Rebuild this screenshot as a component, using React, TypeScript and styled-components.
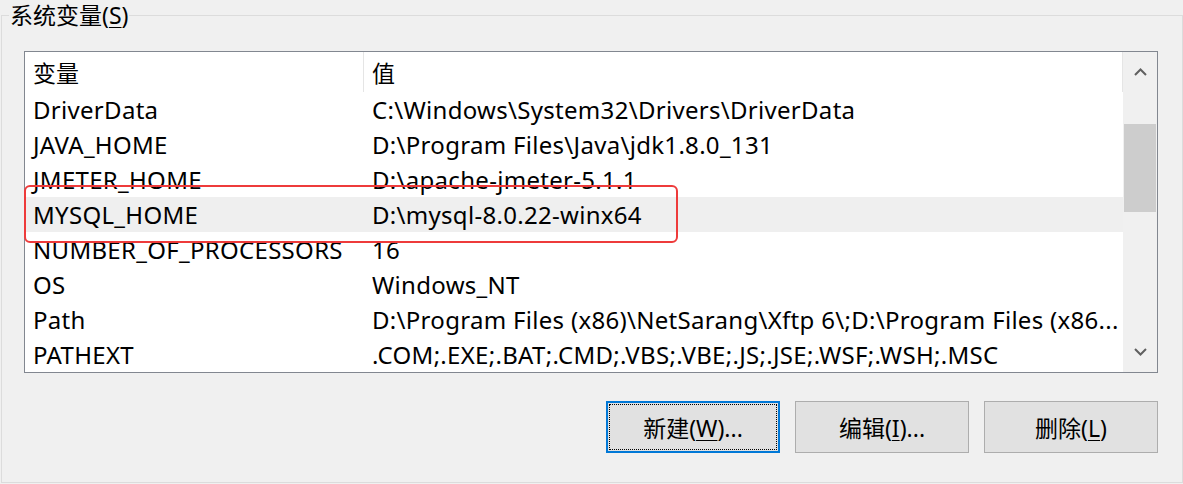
import React from "react";
import styled, { createGlobalStyle } from "styled-components";

const GlobalStyle = createGlobalStyle`
    html, body {
        margin: 0;
        padding: 0;
        background: #f0f0f0;
    }
    body {
        width: 1183px;
        height: 484px;
        overflow: hidden;
        font-family: "Noto Sans", "Noto Sans CJK SC", sans-serif;
        font-size: 23px;
        color: #000;
    }
    * {
        box-sizing: border-box;
    }
`;

const GroupBox = styled.fieldset`
    width: 1182px;
    height: 483px;
    margin: 0 0 0 1px;
    padding: 0 24px 0 22px;
    border: 1px solid #dcdcdc;
    min-width: 0;
`;

const Legend = styled.legend`
    margin-left: -15px;
    padding: 0 1px;
    line-height: 30px;
    font-size: 23px;
`;

const Mnemonic = styled.span`
    text-decoration: underline;
    text-underline-offset: 3px;
    text-decoration-thickness: 1px;
`;

const ListView = styled.div`
    position: relative;
    margin-top: 21px;
    height: 322px;
    border: 1px solid #828790;
    background: #fff;
    display: flex;
`;

const Table = styled.div`
    flex: 1;
    display: flex;
    flex-direction: column;
    min-width: 0;
`;

const HeaderRow = styled.div`
    display: grid;
    grid-template-columns: 339px 1fr;
    height: 40px;
    border-right: 1px solid #e5e5e5;
`;

const HeaderCell = styled.div<{ $divider?: boolean }>`
    padding-left: 8px;
    display: flex;
    align-items: center;
    border-right: ${(p) => (p.$divider ? "1px solid #e5e5e5" : "none")};
`;

const Row = styled.div<{ $hover?: boolean }>`
    display: grid;
    grid-template-columns: 339px 1fr;
    height: 35px;
    align-items: center;
    background: ${(p) => (p.$hover ? "#efefef" : "transparent")};
`;

const Cell = styled.div`
    padding-left: 8px;
    white-space: nowrap;
    overflow: hidden;
    font-size: 24px;
    letter-spacing: 0.3px;
    line-height: 35px;
`;

const ScrollBar = styled.div`
    width: 34px;
    background: #f0f0f0;
    display: flex;
    flex-direction: column;
`;

const ArrowButton = styled.div`
    height: 40px;
    display: flex;
    align-items: center;
    justify-content: center;
    color: #606060;
`;

const Track = styled.div`
    flex: 1;
    padding: 32px 1px 0 1px;
`;

const Thumb = styled.div`
    height: 88px;
    background: #cdcdcd;
`;

const Highlight = styled.div`
    position: absolute;
    left: -1px;
    top: 133px;
    width: 654px;
    height: 58px;
    border: 2px solid #ee3b3b;
    border-radius: 6px;
    pointer-events: none;
`;

const ButtonRow = styled.div`
    display: flex;
    justify-content: flex-end;
    gap: 15px;
    margin-top: 28px;
`;

const Button = styled.button<{ $default?: boolean }>`
    position: relative;
    width: 174px;
    height: 52px;
    background: #e1e1e1;
    border: ${(p) => (p.$default ? "2px solid #0078d7" : "1px solid #adadad")};
    font-family: "Noto Sans", "Noto Sans CJK SC", sans-serif;
    font-size: 23px;
    color: #000;
    padding: 0;

    &::after {
        content: "";
        display: ${(p) => (p.$default ? "block" : "none")};
        position: absolute;
        inset: 1px;
        border: 1px dotted #000;
    }
`;

const Chevron: React.FC<{ down?: boolean }> = ({ down }) => (
    <svg width="13" height="8" viewBox="0 0 13 8">
        <path
            d={down ? "M1 1 L6.5 6.5 L12 1" : "M1 7 L6.5 1.5 L12 7"}
            fill="none"
            stroke="currentColor"
            strokeWidth="2"
        />
    </svg>
);

const rows = [
    ["DriverData", "C:\\Windows\\System32\\Drivers\\DriverData"],
    ["JAVA_HOME", "D:\\Program Files\\Java\\jdk1.8.0_131"],
    ["JMETER_HOME", "D:\\apache-jmeter-5.1.1"],
    ["MYSQL_HOME", "D:\\mysql-8.0.22-winx64"],
    ["NUMBER_OF_PROCESSORS", "16"],
    ["OS", "Windows_NT"],
    ["Path", "D:\\Program Files (x86)\\NetSarang\\Xftp 6\\;D:\\Program Files (x86..."],
    ["PATHEXT", ".COM;.EXE;.BAT;.CMD;.VBS;.VBE;.JS;.JSE;.WSF;.WSH;.MSC"],
];

const App: React.FC = () => {
    return (
        <>
            <GlobalStyle />
            <GroupBox>
                <Legend>
                    系统变量(<Mnemonic>S</Mnemonic>)
                </Legend>
                <ListView>
                    <Table>
                        <HeaderRow>
                            <HeaderCell $divider>变量</HeaderCell>
                            <HeaderCell>值</HeaderCell>
                        </HeaderRow>
                        {rows.map(([name, value]) => (
                            <Row key={name} $hover={name === "MYSQL_HOME"}>
                                <Cell>{name}</Cell>
                                <Cell>{value}</Cell>
                            </Row>
                        ))}
                    </Table>
                    <ScrollBar>
                        <ArrowButton>
                            <Chevron />
                        </ArrowButton>
                        <Track>
                            <Thumb />
                        </Track>
                        <ArrowButton>
                            <Chevron down />
                        </ArrowButton>
                    </ScrollBar>
                    <Highlight />
                </ListView>
                <ButtonRow>
                    <Button $default>
                        新建(<Mnemonic>W</Mnemonic>)...
                    </Button>
                    <Button>
                        编辑(<Mnemonic>I</Mnemonic>)...
                    </Button>
                    <Button>
                        删除(<Mnemonic>L</Mnemonic>)
                    </Button>
                </ButtonRow>
            </GroupBox>
        </>
    );
};

export default App;
